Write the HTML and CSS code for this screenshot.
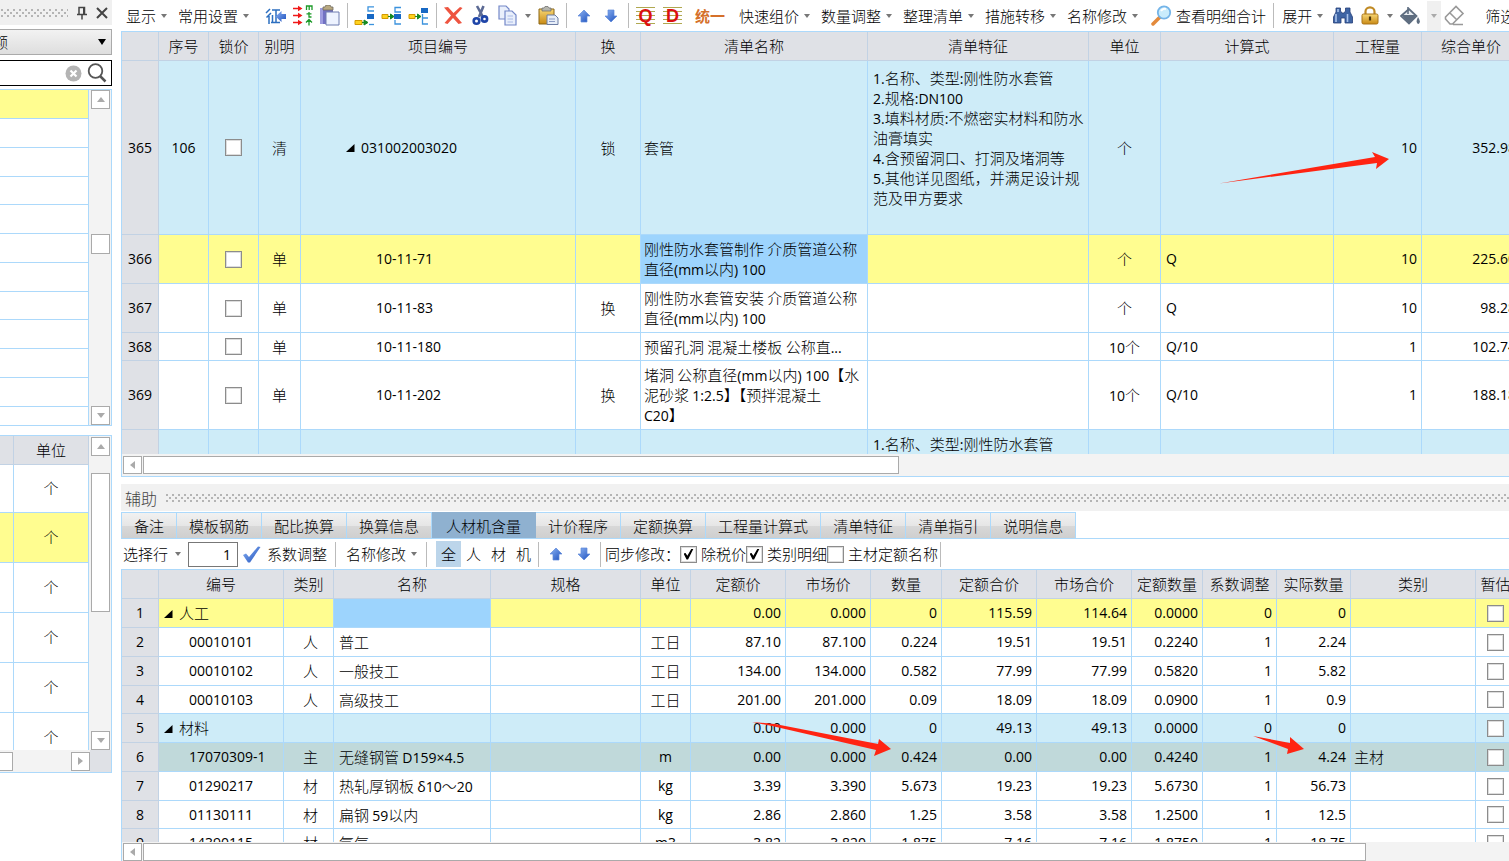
FILE: index.html
```html
<!DOCTYPE html>
<html lang="zh-CN">
<head>
<meta charset="utf-8">
<title>清单计价</title>
<link rel="stylesheet" href="styles.css">
</head>
<body>
<svg class="defs" width="0" height="0" aria-hidden="true">
  <defs>
    <linearGradient id="blue" x1="0" y1="0" x2="1" y2="1"><stop offset="0" stop-color="#8db4f4"/><stop offset="1" stop-color="#1d50bd"/></linearGradient>
    <linearGradient id="gold" x1="0" y1="0" x2="0" y2="1"><stop offset="0" stop-color="#f8d775"/><stop offset="1" stop-color="#c98a14"/></linearGradient>
    <symbol id="up" viewBox="0 0 14 14"><path d="M7 1 13 7H10V13H4V7H1Z" fill="url(#blue)" stroke="#5c86d8" stroke-width=".7"/></symbol>
    <symbol id="down" viewBox="0 0 14 14"><path d="M7 13 1 7H4V1H10V7H13Z" fill="url(#blue)" stroke="#5c86d8" stroke-width=".7"/></symbol>
    <symbol id="leaf" viewBox="0 0 14 10"><path d="M1 9H9.500V1Z" fill="#000"/></symbol>
  </defs>
</svg>

<aside class="side">
  <header class="side-title">
    <span class="grip"></span>
    <button class="bare" aria-label="固定"><svg width="12" height="14" viewBox="0 0 12 14" fill="none" stroke="#444" stroke-width="1.500"><path d="M3 8V1.500H8.500V8M1 8.500H11M6 9V13.500"/><path d="M8 1.500V8" stroke-width="2"/></svg></button>
    <button class="bare" aria-label="关闭"><svg width="12" height="12" viewBox="0 0 12 12" stroke="#444" stroke-width="2"><path d="M1 1 11 11M11 1 1 11"/></svg></button>
  </header>
  <div class="combo">
    <select aria-label="类型"><option>额</option></select>
    <svg width="8" height="6" viewBox="0 0 8 6"><path d="M0 0H8L4 6Z"/></svg>
  </div>
  <div class="search">
    <input type="text" aria-label="搜索">
    <button class="bare" aria-label="清除"><svg width="17" height="17" viewBox="0 0 17 17"><circle cx="8.500" cy="8.500" r="8" fill="#b4b4b4"/><path d="M5.500 5.500 11.500 11.500M11.500 5.500 5.500 11.500" stroke="#fff" stroke-width="2.200"/></svg></button>
    <button class="bare" aria-label="查找"><svg width="20" height="20" viewBox="0 0 20 20" fill="none" stroke="#555"><circle cx="8.500" cy="8" r="6.800" stroke-width="1.800"/><path d="M13 13 18.500 18.500" stroke-width="2.500"/></svg></button>
  </div>
  <section class="box list">
    <ul class="lines">
      <li class="yellow"></li><li></li><li></li><li></li><li></li><li></li><li></li><li></li><li></li><li></li><li></li><li></li>
    </ul>
    <div class="vbar"><button class="arrow up" aria-label="向上"></button><i class="gap"></i><i class="knob"></i><i class="gap last"></i><button class="arrow down" aria-label="向下"></button></div>
  </section>
  <section class="box units">
    <div class="units-body">
      <table class="grid unit-grid">
        <thead><tr><th></th><th>单位</th></tr></thead>
        <tbody>
          <tr><td></td><td>个</td></tr>
          <tr class="yellow"><td></td><td>个</td></tr>
          <tr><td></td><td>个</td></tr>
          <tr><td></td><td>个</td></tr>
          <tr><td></td><td>个</td></tr>
          <tr><td></td><td>个</td></tr>
        </tbody>
      </table>
      <div class="vbar"><button class="arrow up" aria-label="向上"></button><i class="space"></i><i class="knob tall"></i><i class="gap"></i><button class="arrow down" aria-label="向下"></button></div>
    </div>
    <div class="side-hbar"><i class="stub"></i><button class="arrow right" aria-label="向右"></button><i class="corner"></i></div>
  </section>
</aside>

<main class="main">
  <nav class="toolbar">
    <button class="menu">显示</button>
    <button class="menu">常用设置</button>
    <button class="ico" aria-label="征"><svg width="22" height="20" viewBox="0 0 22 20"><g fill="none" stroke="#2c6fc0" stroke-width="1.500"><path d="M5 3 1 7M6 7 1.500 11.500M4 10V18M7 4H15M11 4V16M7.500 9V16M11 10H14M6 16.500H15"/></g><path d="M21 8V13H16.500V16L10.500 10.500 16.500 5V8Z" fill="url(#blue)"/></svg></button>
    <button class="ico" aria-label="流向"><svg width="20" height="21" viewBox="0 0 20 21"><g stroke="#f01818" stroke-width="1.300"><path d="M0 3.500H7M0 10.500H7M0 17.500H7"/></g><path d="M5 .8 9.500 3.500 5 6.200ZM5 7.800 9.500 10.500 5 13.200ZM5 14.800 9.500 17.500 5 20.200Z" fill="#f01818"/><g stroke="#1c9a28" stroke-width="1.300" fill="none"><path d="M13.500 5V1H19V5M16.200 1V5M16 7V12H18.500M13.500 8.800H18.500M16 14.500V20.500M13 17.500 16 14.500 19 17.500"/></g></svg></button>
    <button class="ico" aria-label="粘贴清单"><svg width="21" height="21" viewBox="0 0 21 21"><path d="M1 3H14V19H1Z" fill="#7271c4"/><path d="M1 3H4V19H1Z" fill="#9e9ce0"/><path d="M4 5V2H6L7 0H11L12 2H14V5Z" fill="#b9a980" stroke="#6e6a60" stroke-width=".8"/><path d="M7 7H20V20H7Z" fill="#eef3ff" stroke="#6f7cb0"/></svg></button>
    <i class="sep"></i>
    <button class="ico" aria-label="插入下级"><svg width="21" height="20" viewBox="0 0 21 20"><path d="M20 .8H14V5H20" fill="none" stroke="#3b92dd" stroke-width="1.300"/><path d="M13 8H20V13H13Z" fill="#1768c4"/><path d="M1 14.500H8V18.500H1Z" fill="#ffd21e" stroke="#d39a00"/><path d="M20 18.500H15" fill="none" stroke="#3b92dd" stroke-width="1.300"/><path d="M8 16.500H12M10 14V19L14 16.500Z" stroke="#178a22" fill="#178a22"/></svg></button>
    <button class="ico" aria-label="插入"><svg width="21" height="20" viewBox="0 0 21 20"><path d="M20 1.500H14V6H20M20 18H14V14" fill="none" stroke="#3b92dd" stroke-width="1.300"/><path d="M13 8H20V13H13Z" fill="#1768c4"/><path d="M1 8.500H7V12.500H1Z" fill="#ffd21e" stroke="#d39a00"/><path d="M7 10.500H11M9.500 8V13L13 10.500Z" stroke="#178a22" fill="#178a22"/></svg></button>
    <button class="ico" aria-label="插入上级"><svg width="21" height="20" viewBox="0 0 21 20"><path d="M13 2H20V7H13Z" fill="#1768c4"/><path d="M20 12H14.500V8M14.500 12V18H20" fill="none" stroke="#3b92dd" stroke-width="1.300"/><path d="M1 8.500H7V12.500H1Z" fill="#ffd21e" stroke="#d39a00"/><path d="M7 10.500H11M9.500 8V13L13 10.500Z" stroke="#178a22" fill="#178a22"/></svg></button>
    <i class="sep"></i>
    <button class="ico" aria-label="删除"><svg width="21" height="19" viewBox="0 0 21 19"><path d="M1 1.500 5 1 10.500 7 17 1 19.500 2 12.500 9.500 19 17 15.500 18 10 12 4.500 18 1.500 17 8 9.500Z" fill="#ee5440"/></svg></button>
    <button class="ico" aria-label="剪切"><svg width="17" height="21" viewBox="0 0 17 21"><path d="M5 1 11 12M11.500 1 7 12" stroke="#5c6a94" stroke-width="2.600"/><g fill="none" stroke="#1f45a8" stroke-width="2.600"><circle cx="4.500" cy="16" r="2.800"/><circle cx="12.500" cy="14" r="2.600"/></g></svg></button>
    <button class="ico" aria-label="复制"><svg width="19" height="21" viewBox="0 0 19 21"><g fill="#e9effb" stroke="#7488c8" stroke-width="1.200"><path d="M1 1H8L11 4V14H1Z"/><path d="M7 6H14L18 10V20H7Z"/></g><path d="M9.500 11H15M9.500 14H15M9.500 17H15" stroke="#a9bae6"/></svg></button>
    <button class="drop" aria-label="更多"></button>
    <button class="ico" aria-label="粘贴"><svg width="21" height="20" viewBox="0 0 21 20"><path d="M1 3H16V18H1Z" fill="url(#gold)" stroke="#8b6617"/><path d="M4 5V2H6L7 .5H10L11 2H13V5Z" fill="#b5b5ad" stroke="#666" stroke-width=".7"/><path d="M9 9H17L20 12V18.500H9Z" fill="#e6edf8" stroke="#6b7ca4"/><path d="M11 13H17M11 15.500H17" stroke="#8a9bc4"/></svg></button>
    <i class="sep"></i>
    <button class="ico" aria-label="上移"><svg width="14" height="14"><use href="#up"/></svg></button>
    <button class="ico" aria-label="下移"><svg width="14" height="14"><use href="#down"/></svg></button>
    <i class="sep"></i>
    <button class="ico stripes"><b>Q</b></button>
    <button class="ico stripes"><b>D</b></button>
    <button class="unify">统一</button>
    <button class="menu">快速组价</button>
    <button class="menu">数量调整</button>
    <button class="menu">整理清单</button>
    <button class="menu">措施转移</button>
    <button class="menu">名称修改</button>
    <button class="look"><svg width="21" height="21" viewBox="0 0 21 21"><path d="M9 12 2 19" stroke="#e38a3c" stroke-width="3.500" stroke-linecap="round"/><circle cx="13" cy="7.500" r="6.200" fill="#c9ecfc" stroke="#74b4e8" stroke-width="1.800"/><path d="M10 6Q12 3 15 4" stroke="#fff" stroke-width="2" fill="none"/></svg>查看明细合计</button>
    <i class="sep"></i>
    <button class="menu expand">展开</button>
    <button class="ico" aria-label="查找"><svg width="20" height="17" viewBox="0 0 20 17"><path d="M3 1H7.500V4L9 6H11L12.500 4V1H17V5L19.500 10V16H12V11H8V16H.5V10L3 5Z" fill="#3e64a4" stroke="#263f78" stroke-width=".8"/><path d="M3 7V15M14.500 7V15M5 2V5" stroke="#a9c3ec" stroke-width="1.600"/></svg></button>
    <button class="ico" aria-label="锁定"><svg width="18" height="19" viewBox="0 0 18 19"><path d="M4.500 9V5.500A4.500 4.200 0 0 1 13.500 5.500V9" fill="none" stroke="#c08a24" stroke-width="2.200"/><rect x="1" y="8" width="16" height="10" rx="1.500" fill="url(#gold)" stroke="#a9741a"/><path d="M9 10.500V14.500" stroke="#4d350a" stroke-width="2.200"/></svg></button>
    <button class="drop" aria-label="更多"></button>
    <button class="ico" aria-label="填充"><svg width="21" height="18" viewBox="0 0 21 18"><path d="M1 9 9 2 16.500 9 9 16.500Z" fill="#e8ecf0" stroke="#5e6d80" stroke-width="1.800"/><path d="M1.500 8H16.500L9 16.500Z" fill="#5e6d80"/><path d="M8 0V7" stroke="#5e6d80" stroke-width="1.600"/><path d="M18 10Q21.500 15 18.500 17 15 16 18 10Z" fill="#5e6d80"/></svg></button>
    <button class="drop boxed" aria-label="更多"></button>
    <button class="ico" aria-label="擦除"><svg width="21" height="21" viewBox="0 0 21 21" fill="none" stroke="#999" stroke-width="1.600"><path d="M1.500 12 12 1.500 19 8.500 8.500 19H6L1.500 14ZM6 8 12.500 14.500M9 19.500H19"/></svg></button>
    <button class="filter">筛选</button>
  </nav>

  <section class="box upper">
    <div class="view">
      <table class="grid bill">
        <colgroup><col class="w37"><col class="w50"><col class="w50"><col class="w42"><col class="w275"><col class="w65"><col class="w227"><col class="w221"><col class="w72"><col class="w173"><col class="w88"><col class="w99"></colgroup>
        <thead><tr><th></th><th>序号</th><th>锁价</th><th>别明</th><th>项目编号</th><th>换</th><th>清单名称</th><th>清单特征</th><th>单位</th><th>计算式</th><th>工程量</th><th>综合单价</th></tr></thead>
        <tbody>
          <tr class="blue h174"><th class="n">365</th><td class="n c">106</td><td class="c"><input type="checkbox" aria-label="锁价 365"></td><td class="c">清</td><td class="n code root"><svg width="14" height="10"><use href="#leaf"/></svg>031002003020</td><td class="c">锁</td><td class="name">套管</td><td class="feat"><span class="n">1.</span>名称、类型<span class="n">:</span>刚性防水套管<br><span class="n">2.</span>规格<span class="n">:DN100</span><br><span class="n">3.</span>填料材质<span class="n">:</span>不燃密实材料和防水<br>油膏填实<br><span class="n">4.</span>含预留洞口、打洞及堵洞等<br><span class="n">5.</span>其他详见图纸，并满足设计规<br>范及甲方要求</td><td class="c">个</td><td></td><td class="n r">10</td><td class="n r">352.98</td></tr>
          <tr class="yellow h49"><th class="n">366</th><td></td><td class="c"><input type="checkbox" aria-label="锁价 366"></td><td class="c">单</td><td class="n code">10-11-71</td><td></td><td class="name sel">刚性防水套管制作 介质管道公称<br>直径<span class="n">(mm</span>以内<span class="n">) 100</span></td><td></td><td class="c">个</td><td class="n l">Q</td><td class="n r">10</td><td class="n r">225.60</td></tr>
          <tr class="h49"><th class="n">367</th><td></td><td class="c"><input type="checkbox" aria-label="锁价 367"></td><td class="c">单</td><td class="n code">10-11-83</td><td class="c">换</td><td class="name">刚性防水套管安装 介质管道公称<br>直径<span class="n">(mm</span>以内<span class="n">) 100</span></td><td></td><td class="c">个</td><td class="n l">Q</td><td class="n r">10</td><td class="n r">98.28</td></tr>
          <tr class="h28"><th class="n">368</th><td></td><td class="c"><input type="checkbox" aria-label="锁价 368"></td><td class="c">单</td><td class="n code">10-11-180</td><td></td><td class="name">预留孔洞 混凝土楼板 公称直<span class="n">...</span></td><td></td><td class="c"><span class="n">10</span>个</td><td class="n l">Q/10</td><td class="n r">1</td><td class="n r">102.74</td></tr>
          <tr class="h69"><th class="n">369</th><td></td><td class="c"><input type="checkbox" aria-label="锁价 369"></td><td class="c">单</td><td class="n code">10-11-202</td><td class="c">换</td><td class="name">堵洞 公称直径<span class="n">(mm</span>以内<span class="n">) 100</span>【水<br>泥砂浆 <span class="n">1:2.5</span>】【预拌混凝土<br><span class="n">C20</span>】</td><td></td><td class="c"><span class="n">10</span>个</td><td class="n l">Q/10</td><td class="n r">1</td><td class="n r">188.18</td></tr>
          <tr class="blue h174"><th></th><td></td><td></td><td></td><td></td><td></td><td></td><td class="feat next"><span class="n">1.</span>名称、类型<span class="n">:</span>刚性防水套管</td><td></td><td></td><td></td><td></td></tr>
        </tbody>
      </table>
    </div>
    <div class="hbar"><button class="arrow left" aria-label="向左"></button><i class="thumb half"></i></div>
    <svg class="mark mark-a" width="170" height="32" viewBox="0 0 170 32"><path d="M0 31.500 156 5 153 0 170 7 157 17 158 11Z" fill="#ff2412"/></svg>
  </section>

  <header class="aux"><span>辅助</span><i class="grip"></i></header>
  <nav class="tabs">
    <button>备注</button><button>模板钢筋</button><button>配比换算</button><button>换算信息</button><button class="on">人材机含量</button><button>计价程序</button><button>定额换算</button><button>工程量计算式</button><button>清单特征</button><button>清单指引</button><button>说明信息</button>
  </nav>
  <div class="subbar">
    <button class="menu pick">选择行</button>
    <input class="num" type="text" value="1" aria-label="行号">
    <button class="apply"><svg width="19" height="17" viewBox="0 0 19 17"><path d="M1 9 4 7.500 7 11 16 .5 18.500 1 8 16.500H6Z" fill="url(#blue)"/></svg>系数调整</button>
    <i class="sep"></i>
    <button class="menu rename">名称修改</button>
    <i class="sep"></i>
    <div class="kinds"><button class="on">全</button><button>人</button><button>材</button><button>机</button></div>
    <i class="sep"></i>
    <button class="ico" aria-label="上移"><svg width="14" height="14"><use href="#up"/></svg></button>
    <button class="ico" aria-label="下移"><svg width="14" height="14"><use href="#down"/></svg></button>
    <i class="sep"></i>
    <span class="sync">同步修改：</span>
    <label><input type="checkbox" checked>除税价</label><label><input type="checkbox" checked>类别明细</label><label><input type="checkbox">主材定额名称</label>
    <i class="sep"></i>
  </div>

  <section class="box lower">
    <div class="view">
      <table class="grid items">
        <colgroup><col class="w37"><col class="w125"><col class="w50"><col class="w157"><col class="w150"><col class="w50"><col class="w95"><col class="w85"><col class="w71"><col class="w95"><col class="w95"><col class="w71"><col class="w74"><col class="w74"><col class="w125"><col class="w40"></colgroup>
        <thead><tr><th></th><th>编号</th><th>类别</th><th>名称</th><th>规格</th><th>单位</th><th>定额价</th><th>市场价</th><th>数量</th><th>定额合价</th><th>市场合价</th><th>定额数量</th><th>系数调整</th><th>实际数量</th><th>类别</th><th>暂估</th></tr></thead>
        <tbody>
          <tr class="yellow"><th class="n">1</th><td class="group"><svg width="14" height="10"><use href="#leaf"/></svg>人工</td><td></td><td class="sel"></td><td></td><td></td><td class="n r">0.00</td><td class="n r">0.000</td><td class="n r">0</td><td class="n r">115.59</td><td class="n r">114.64</td><td class="n r">0.0000</td><td class="n r">0</td><td class="n r">0</td><td></td><td class="c"><input type="checkbox" aria-label="暂估 1"></td></tr>
          <tr><th class="n">2</th><td class="n id">00010101</td><td class="c sort">人</td><td class="l">普工</td><td></td><td class="c">工日</td><td class="n r">87.10</td><td class="n r">87.100</td><td class="n r">0.224</td><td class="n r">19.51</td><td class="n r">19.51</td><td class="n r">0.2240</td><td class="n r">1</td><td class="n r">2.24</td><td></td><td class="c"><input type="checkbox" aria-label="暂估 2"></td></tr>
          <tr><th class="n">3</th><td class="n id">00010102</td><td class="c sort">人</td><td class="l">一般技工</td><td></td><td class="c">工日</td><td class="n r">134.00</td><td class="n r">134.000</td><td class="n r">0.582</td><td class="n r">77.99</td><td class="n r">77.99</td><td class="n r">0.5820</td><td class="n r">1</td><td class="n r">5.82</td><td></td><td class="c"><input type="checkbox" aria-label="暂估 3"></td></tr>
          <tr class="h28"><th class="n">4</th><td class="n id">00010103</td><td class="c sort">人</td><td class="l">高级技工</td><td></td><td class="c">工日</td><td class="n r">201.00</td><td class="n r">201.000</td><td class="n r">0.09</td><td class="n r">18.09</td><td class="n r">18.09</td><td class="n r">0.0900</td><td class="n r">1</td><td class="n r">0.9</td><td></td><td class="c"><input type="checkbox" aria-label="暂估 4"></td></tr>
          <tr class="blue"><th class="n">5</th><td class="group"><svg width="14" height="10"><use href="#leaf"/></svg>材料</td><td></td><td></td><td></td><td></td><td class="n r">0.00</td><td class="n r">0.000</td><td class="n r">0</td><td class="n r">49.13</td><td class="n r">49.13</td><td class="n r">0.0000</td><td class="n r">0</td><td class="n r">0</td><td></td><td class="c"><input type="checkbox" aria-label="暂估 5"></td></tr>
          <tr class="teal"><th class="n">6</th><td class="n id">17070309-1</td><td class="c sort">主</td><td class="l">无缝钢管 <span class="n">D159×4.5</span></td><td></td><td class="n c">m</td><td class="n r">0.00</td><td class="n r">0.000</td><td class="n r">0.424</td><td class="n r">0.00</td><td class="n r">0.00</td><td class="n r">0.4240</td><td class="n r">1</td><td class="n r">4.24</td><td class="kind">主材</td><td class="c"><input type="checkbox" aria-label="暂估 6"></td></tr>
          <tr><th class="n">7</th><td class="n id">01290217</td><td class="c sort">材</td><td class="l">热轧厚钢板 <span class="n">δ10</span>～<span class="n">20</span></td><td></td><td class="n c">kg</td><td class="n r">3.39</td><td class="n r">3.390</td><td class="n r">5.673</td><td class="n r">19.23</td><td class="n r">19.23</td><td class="n r">5.6730</td><td class="n r">1</td><td class="n r">56.73</td><td></td><td class="c"><input type="checkbox" aria-label="暂估 7"></td></tr>
          <tr class="h28"><th class="n">8</th><td class="n id">01130111</td><td class="c sort">材</td><td class="l">扁钢 <span class="n">59</span>以内</td><td></td><td class="n c">kg</td><td class="n r">2.86</td><td class="n r">2.860</td><td class="n r">1.25</td><td class="n r">3.58</td><td class="n r">3.58</td><td class="n r">1.2500</td><td class="n r">1</td><td class="n r">12.5</td><td></td><td class="c"><input type="checkbox" aria-label="暂估 8"></td></tr>
          <tr><th class="n">9</th><td class="n id">14390115</td><td class="c sort">材</td><td class="l">氧气</td><td></td><td class="n c">m3</td><td class="n r">3.82</td><td class="n r">3.820</td><td class="n r">1.875</td><td class="n r">7.16</td><td class="n r">7.16</td><td class="n r">1.8750</td><td class="n r">1</td><td class="n r">18.75</td><td></td><td class="c"><input type="checkbox" aria-label="暂估 9"></td></tr>
        </tbody>
      </table>
    </div>
    <div class="hbar"><button class="arrow left" aria-label="向左"></button><i class="thumb wide"></i></div>
    <svg class="mark mark-b" width="140" height="35" viewBox="0 0 140 35"><path d="M0 0 23 2 126 22 127 17 139 27 122 34 124 28 20 4Z" fill="#ff2412"/></svg>
    <svg class="mark mark-c" width="52" height="20" viewBox="0 0 52 20"><path d="M0 1 37 8 37 2 51 14 34 19 35 14Z" fill="#ff2412"/></svg>
  </section>
</main>
</body>
</html>
```
FILE: styles.css
```css
:root {
  --line: #acd9fb;
  --head: #dfe1e6;
  --head-line: #c2d2e4;
  --track: #f3f3f3;
  --edge: #aaa;
}

* { box-sizing: border-box; }

body {
  margin: 0;
  height: 100vh;
  overflow: hidden;
  display: flex;
  gap: 9px;
  background: #fff;
  color: #000;
  font: 300 15px/20px "Noto Sans CJK SC", sans-serif;
  white-space: nowrap;
}

button, input, select { font: inherit; color: inherit; margin: 0; }
button { border: 0; padding: 0; background: none; white-space: nowrap; }
svg { display: block; flex: none; }
i { font-style: normal; }
.defs { position: absolute; }
.grid .n { font-family: "Open Sans", "Noto Sans CJK SC", sans-serif; font-size: 14px; font-weight: 400; }
span.n { line-height: 16px; }

.box { border: 1px solid var(--line); }
.yellow { background: #fffd90; }
.blue { background: #ceecf8; }
.teal { background: #c0d9da; }

.grip {
  flex: 1;
  height: 8px;
  background-image:
    radial-gradient(circle at 1px 1px, #b4b4b4 1px, transparent 1px),
    radial-gradient(circle at 4px 4px, #b4b4b4 1px, transparent 1px);
  background-size: 6px 6px;
}

/* scroll bars */
.arrow {
  flex: none;
  width: 19px;
  height: 19px;
  background: #fff;
  border: 1px solid var(--edge);
  display: grid;
  place-items: center;
}
.arrow::before { content: ""; border: 4px solid transparent; }
.arrow.up::before { border-top: 0; border-bottom: 5px solid var(--edge); }
.arrow.down::before { border-bottom: 0; border-top: 5px solid var(--edge); }
.arrow.left::before { border-left: 0; border-right: 5px solid var(--edge); }
.arrow.right::before { border-right: 0; border-left: 5px solid var(--edge); }
.vbar {
  flex: none;
  width: 22px;
  padding: 0 1px 0 2px;
  background: var(--track);
  display: flex;
  flex-direction: column;
}
.vbar .gap { flex: 124; }
.vbar .gap.last { flex: 151; }
.vbar .space { height: 17px; }
.knob { height: 20px; background: #fff; border: 1px solid var(--edge); }
.knob.tall { height: 139px; }
.hbar {
  flex: none;
  height: 22px;
  padding: 2px 0 0 1px;
  background: var(--track);
  display: flex;
  gap: 1px;
}
.hbar .arrow { height: 18px; }
.thumb { height: 18px; background: #fff; border: 1px solid var(--edge); }
.thumb.half { width: 756px; }
.thumb.wide { width: 1223px; }

/* side panel */
.side { flex: none; width: 112px; display: flex; flex-direction: column; }
.side-title {
  height: 25px;
  padding: 0 4px 0 1px;
  background: #f0f0f0;
  display: flex;
  align-items: center;
  gap: 8px;
}
.combo { margin: 4px 0 5px -9px; display: grid; align-items: center; }
.combo > * { grid-area: 1 / 1; }
.combo select {
  appearance: none;
  height: 26px;
  width: 100%;
  padding: 0 0 0 1px;
  border: 1px solid var(--edge);
  border-radius: 0;
  background: linear-gradient(#f2f2f2, #dedede);
}
.combo svg { justify-self: end; margin-right: 6px; pointer-events: none; }
.search {
  height: 26px;
  border: 1px solid #000;
  border-left: 0;
  padding-right: 4px;
  display: flex;
  align-items: center;
  gap: 5px;
}
.search input { flex: 1; min-width: 0; height: 22px; border: 0; outline: 0; padding: 0; }
.list { margin-top: 3px; height: 337px; border-left: 0; display: flex; overflow: hidden; }
.lines { flex: 1; margin: 0; padding: 0; list-style: none; border-right: 1px solid var(--line); overflow: hidden; }
.lines li { height: 29px; border-bottom: 1px solid var(--line); }
.lines li:nth-child(4n) { height: 28px; }
.units { margin-top: 9px; height: 338px; border-left: 0; display: flex; flex-direction: column; }
.units-body { flex: 1; min-height: 0; display: flex; overflow: hidden; }
.units .vbar { padding-top: 1px; }
.unit-grid { width: 89px; height: 0; }
.unit-grid th:first-child { width: 14px; }
.unit-grid td { height: 50px; padding-bottom: 2px; text-align: center; }
.unit-grid tbody tr:first-child td { height: 48px; }
.grid.unit-grid td { padding-bottom: 2px; }
.side-hbar { height: 22px; background: var(--track); display: flex; align-items: center; }
.stub { width: 13px; height: 19px; background: #fff; border: 1px solid var(--edge); border-left: 0; margin-right: auto; }
.corner { width: 21px; height: 100%; background: var(--head); }

/* toolbars */
.main { flex: 1; min-width: 0; display: flex; flex-direction: column; }
.toolbar { height: 31px; padding-left: 5px; display: flex; align-items: center; overflow: hidden; }
.toolbar > *, .subbar > * { flex: none; }
.menu { display: flex; align-items: center; gap: 5px; padding-right: 10px; }
.menu::after, .drop::after {
  content: "";
  border: 4px solid transparent;
  border-width: 4px 3px 0;
  border-top-color: #777;
}
.menu::after { margin-right: 1px; }
.expand { padding: 0 5px; }
.ico { width: 27px; height: 27px; display: grid; place-items: center; }
.menu:not(.expand) + .ico { margin-left: 2px; }
.drop { width: 14px; height: 30px; display: grid; place-items: center; }
.boxed { margin-left: 3px; background: #f0f0f0; }
.boxed::after { border-top-color: #aaa; }
.sep { width: 1px; height: 25px; margin: 0 3px 0 4px; background: #bbb; }
.stripes { background: repeating-linear-gradient(#b0a850 0 1px, #fff 1px 4px) center / 19px 17px no-repeat; }
.stripes b { font: bold 18px/20px "Liberation Sans", sans-serif; color: #dc1010; }
.unify { width: 53px; padding-right: 5px; color: #d5702a; font-weight: bold; }
.look { display: flex; align-items: center; gap: 4px; padding: 0 3px 0 2px; }
.filter { padding-left: 17px; }

/* grids */
.grid { table-layout: fixed; border-spacing: 0; }
.bill { width: 1399px; }
.items { width: 1394px; }
.grid th, .grid td { padding: 0; border: solid var(--line); border-width: 0 1px 1px 0; }
.grid th { background: var(--head); font-weight: inherit; border-color: var(--head-line); }
.grid thead th { height: 29px; }
.grid td input { display: grid; margin: 0 auto; }
.w37 { width: 37px; } .w40 { width: 40px; } .w42 { width: 42px; } .w50 { width: 50px; }
.w65 { width: 65px; } .w71 { width: 71px; } .w72 { width: 72px; } .w74 { width: 74px; }
.w85 { width: 85px; } .w88 { width: 88px; } .w95 { width: 95px; } .w99 { width: 99px; }
.w125 { width: 125px; } .w150 { width: 150px; } .w157 { width: 157px; } .w173 { width: 173px; }
.w221 { width: 221px; } .w227 { width: 227px; } .w275 { width: 275px; }
.grid .c { text-align: center; }
.grid .r { text-align: right; padding-right: 4px; }
.grid .l { padding-left: 5px; }
.grid .sel { background: #9dd4fd; }
.grid .name, .grid .kind { padding-left: 3px; }
.grid .code { padding-left: 75px; }
.grid .id { padding-left: 30px; }
.grid .root { padding-left: 44px; }
.grid .group { padding-left: 4px; }
.grid .sort { padding-left: 4px; }
.root svg, .group svg { display: inline-block; margin-right: 2px; }
.grid .feat { padding: 7px 0 0 5px; vertical-align: top; }
.grid .next { padding-top: 4px; }
.h174 { height: 174px; }
.h49 { height: 49px; }
.h69 { height: 69px; }
.items tbody tr { height: 29px; }
.items tbody tr.h28, .h28 { height: 28px; }

.upper, .lower { position: relative; display: flex; flex-direction: column; border-right: 0; }
.upper { height: 446px; }
.lower { flex: 1; min-height: 0; border-bottom: 0; }
.view { flex: 1; min-height: 0; overflow: hidden; }
.lower .hbar { height: 19px; padding-top: 1px; }
.mark { position: absolute; pointer-events: none; }
.mark-a { left: 1097px; top: 120px; }
.mark-b { left: 630px; top: 152px; }
.mark-c { left: 1131px; top: 165px; }

input[type="checkbox"] {
  appearance: none;
  width: 17px;
  height: 17px;
  background: #fff;
  border: 1px solid #8c8c8c;
  box-shadow: inset 0 0 0 1px #ddd;
  display: grid;
  place-items: center;
}
input[type="checkbox"]:checked::before {
  content: "";
  width: 10px;
  height: 11px;
  background: #000;
  clip-path: polygon(0 45%, 20% 40%, 38% 65%, 80% 0, 100% 0, 45% 100%, 30% 100%);
}

/* lower pane */
.aux {
  margin-top: 7px;
  height: 27px;
  padding-left: 4px;
  background: #f1f1f1;
  color: #444;
  font-size: 16px;
  display: flex;
  align-items: center;
  gap: 9px;
}
.tabs { margin-top: 1px; height: 27px; border-bottom: 1px solid var(--line); display: flex; }
.tabs button {
  padding: 0 12px;
  border: solid var(--line);
  border-width: 1px 1px 0 0;
  background: linear-gradient(#f1f1f1, #e6e6e6 50%, #d8d8d8 51%, #cfcfcf);
}
.tabs button:first-child { border-left-width: 1px; }
.tabs .on { padding: 0 14px; background: #8fb1d0; border-color: #8fb1d0; }
.subbar { height: 30px; padding-left: 2px; display: flex; align-items: center; overflow: hidden; }
.subbar .menu { gap: 7px; }
.subbar .pick { padding-right: 6px; }
.subbar .rename { padding: 0 6px 0 7px; gap: 5px; }
.subbar .sep { margin-left: 2px; }
.num { width: 50px; height: 25px; padding: 0 6px; border: 1px solid #777; text-align: right; font: 14px/20px "Open Sans", sans-serif; }
.apply { display: flex; align-items: center; gap: 6px; padding: 0 6px 0 4px; }
.kinds { display: flex; padding-left: 6px; }
.kinds button { width: 25px; height: 26px; }
.kinds .on { background: #bcd5ea; }
.subbar .ico { width: 28px; }
.sync { width: 76px; padding-left: 1px; }
.subbar label { display: flex; align-items: center; gap: 4px; }
```
